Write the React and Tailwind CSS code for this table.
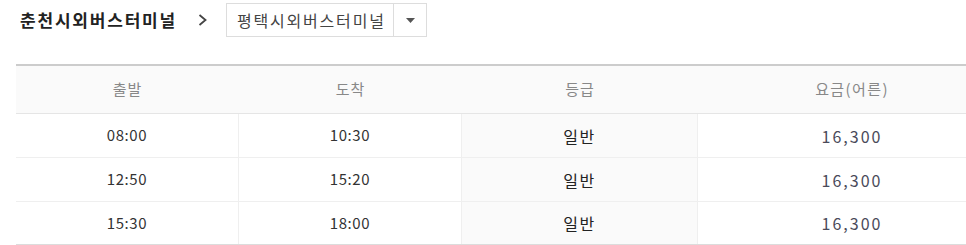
const rows = [
  { depart: '08:00', arrive: '10:30', grade: '일반', fare: '16,300' },
  { depart: '12:50', arrive: '15:20', grade: '일반', fare: '16,300' },
  { depart: '15:30', arrive: '18:00', grade: '일반', fare: '16,300' },
]

function App() {
  return (
    <div
      className="w-[966px] h-[245px] overflow-hidden bg-white"
      style={{ fontFamily: '"Noto Sans CJK KR", "Noto Sans", sans-serif' }}
    >
      {/* Route header */}
      <div className="flex items-center h-[38px] pl-[20px] pt-[2px]">
        <span className="w-[157px] text-[17px] font-bold text-[#222] tracking-[1.8px] whitespace-nowrap">춘천시외버스터미널</span>
        <svg className="ml-[19px] mr-[17px]" width="13" height="14" viewBox="0 0 13 14">
          <path d="M3.5 2 L9.5 7 L3.5 12" fill="none" stroke="#444" strokeWidth="1.8" />
        </svg>
        <div className="flex items-stretch h-[34px] border border-[#ddd] bg-white">
          <span className="flex items-center w-[166px] pl-[10px] text-[16px] text-[#444] tracking-[1.8px] whitespace-nowrap">평택시외버스터미널</span>
          <span className="flex items-center justify-center w-[33px] border-l border-[#ddd]">
            <svg width="9" height="5" viewBox="0 0 9 5">
              <path d="M0 0 H9 L4.5 5 Z" fill="#555" />
            </svg>
          </span>
        </div>
      </div>

      {/* Timetable */}
      <div className="mt-[26px] ml-[16px] w-[990px] border-t-[2px] border-[#ccc]">
        <div className="grid grid-cols-[223px_223px_236px_308px] h-[48px] bg-[#fafafa] border-b border-[#e5e5e5] text-[15px] text-[#888]">
          <div className="flex items-center justify-center tracking-[1px]">출발</div>
          <div className="flex items-center justify-center tracking-[1px]">도착</div>
          <div className="flex items-center justify-center tracking-[1px]">등급</div>
          <div className="flex items-center justify-center tracking-[1.4px]">요금(어른)</div>
        </div>
        {rows.map((row, i) => (
          <div
            key={i}
            className={`grid grid-cols-[223px_223px_236px_308px] text-[15px] ${i === rows.length - 1 ? 'h-[43px] border-b border-[#dcdcdc]' : 'h-[44px] border-b border-[#efefef]'}`}
          >
            <div className="flex items-center justify-center text-[#333] tracking-[0.6px] border-r border-[#efefef]">{row.depart}</div>
            <div className="flex items-center justify-center text-[#333] tracking-[0.6px] border-r border-[#efefef]">{row.arrive}</div>
            <div className="flex items-center justify-center text-[16px] text-[#222] tracking-[1.5px] bg-[#fafafa] border-r border-[#efefef]">{row.grade}</div>
            <div className="flex items-center justify-center text-[16px] text-[#4a4a5a] tracking-[2px]">{row.fare}</div>
          </div>
        ))}
      </div>
    </div>
  )
}

export default App
